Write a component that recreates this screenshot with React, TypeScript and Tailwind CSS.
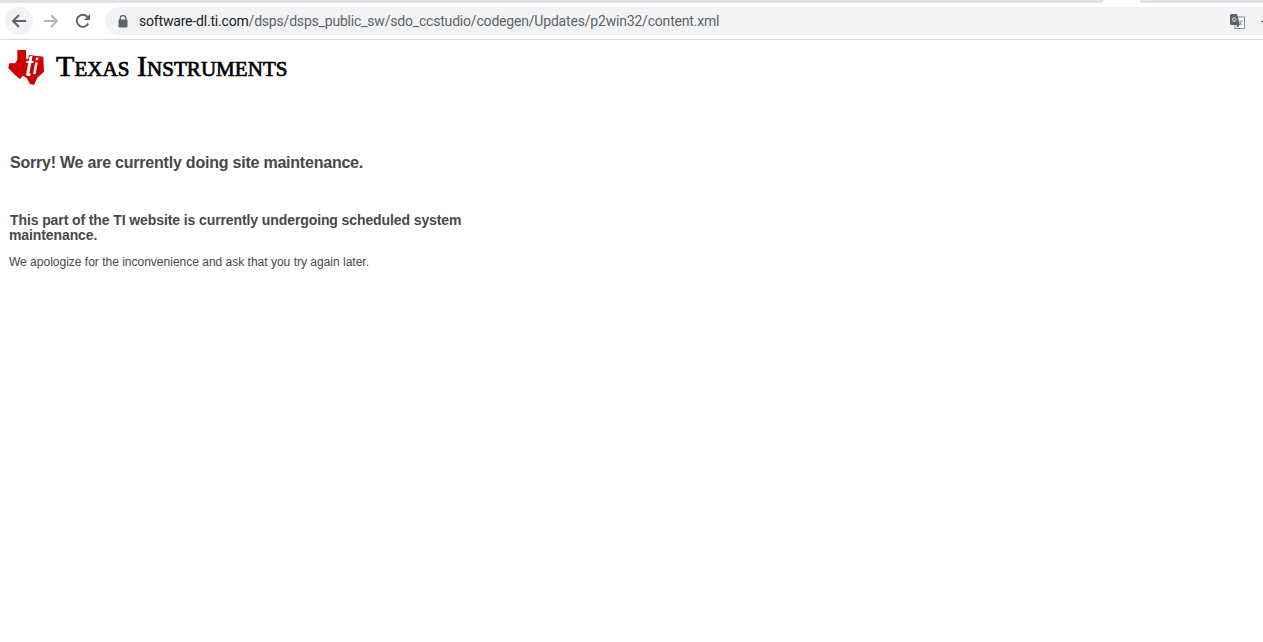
const BackIcon = () => (
  <svg width="16" height="16" viewBox="0 0 16 16" fill="none" stroke="#5f6368" strokeWidth="2">
    <path d="M15 8H2M8 2 2 8l6 6" />
  </svg>
);

const ForwardIcon = () => (
  <svg width="16" height="16" viewBox="0 0 16 16" fill="none" stroke="#b4b6b9" strokeWidth="2">
    <path d="M1 8h13M8 2l6 6-6 6" />
  </svg>
);

const ReloadIcon = () => (
  <svg width="16" height="16" viewBox="0 0 16 16" fill="none">
    <path d="M13.2 10.5A6 6 0 1 1 12.2 3.7L14 5.5" stroke="#5f6368" strokeWidth="1.9" />
    <path d="M15 1v6H9z" fill="#5f6368" />
  </svg>
);

const LockIcon = () => (
  <svg width="10" height="13" viewBox="0 0 10 13">
    <path d="M2.2 5V3.4a2.8 2.8 0 0 1 5.6 0V5" fill="none" stroke="#5f6368" strokeWidth="1.3" />
    <rect x="0.5" y="4.6" width="9" height="8" rx="1" fill="#5f6368" />
  </svg>
);

const TranslateIcon = () => (
  <svg width="15" height="15" viewBox="0 0 15 15">
    <rect x="5" y="3" width="9.5" height="11.5" fill="#fff" stroke="#8a8d91" />
    <path d="M0 1.5A1.5 1.5 0 0 1 1.5 0H7l3 11H1.5A1.5 1.5 0 0 1 0 9.5z" fill="#5f6368" />
    <path d="M6.5 11h3l-2 3z" fill="#5f6368" />
    <circle cx="4.2" cy="5.5" r="1.8" fill="none" stroke="#e8e8e8" strokeWidth="1" />
    <path d="M9.5 7h3.5M11 7.5l-1 4M10 8.500l3 3" stroke="#8a8d91" strokeWidth="0.9" fill="none" />
  </svg>
);

const TiLogo = () => (
  <svg width="37" height="36" viewBox="0 0 37 36" className="shrink-0">
    <path
      fill="#cc0000"
      d="M9.300 0H18v8.300L20 9.500 21 5l14.300 1.700.7 15-6.700 6L26 35l-4-1-3.300-6-4-2.300-2.700 3.600-5-4.300-6.700-6.700 1-5H7L9.300 10z"
    />
    <path fill="#fff" d="M21.800 6h2.600l-.7 5h2l-.4 2h-2l-1.800 9.500c-.2 1 .4 1.300 1.200 1.100l-.4 2.400h-2.600c-1.200 0-1.700-.8-1.500-2l2-11h-2l.4-2h2z" />
    <path fill="#fff" d="M28 7.500h2.500l-.5 2.700h-2.500zM27.200 12.500h2.500L27.600 24h-2.500z" />
  </svg>
);

const App = () => (
  <div className="h-[642px] w-full overflow-hidden bg-white font-['Liberation_Sans',Arial,sans-serif]">
    <div className="flex h-[3px] bg-white">
      <div className="h-full w-[1103px] rounded-br-lg bg-[#dee1e6]" />
      <div className="ml-[37px] h-full grow rounded-bl-lg bg-[#dee1e6]" />
    </div>

    <div className="flex h-[37px] items-center border-b border-[#d9dadc] pb-[2px] pt-[2px]">
      <div className="ml-[5px] flex h-7 w-7 items-center justify-center rounded-full bg-[#f1f3f4]">
        <BackIcon />
      </div>
      <div className="ml-[4px] flex h-7 w-7 items-center justify-center">
        <ForwardIcon />
      </div>
      <div className="ml-[4px] flex h-7 w-7 items-center justify-center">
        <ReloadIcon />
      </div>
      <div className="ml-[8px] flex h-7 grow items-center rounded-l-full bg-[#f1f3f4] pl-[13px]">
        <LockIcon />
        <span className="ml-[11px] whitespace-nowrap font-['Roboto','Noto_Sans',sans-serif] text-[14px] tracking-[-0.19px] text-[#5f6368]">
          <span className="text-[#202124]">software-dl.ti.com</span>
          /dsps/dsps_public_sw/sdo_ccstudio/codegen/Updates/p2win32/content.xml
        </span>
        <div className="ml-auto flex items-center">
          <TranslateIcon />
          <div className="ml-[16px] h-px w-[2px] bg-[#5f6368]" />
        </div>
      </div>
    </div>

    <div className="flex items-start pl-2 pt-[10px]">
      <TiLogo />
      <span className="ml-[11px] whitespace-nowrap font-['Liberation_Serif',serif] text-[30px] leading-[32px] tracking-[0.05px] text-black [-webkit-text-stroke:0.7px_black] [font-variant:small-caps]">
        Texas Instruments
      </span>
    </div>

    <div className="w-[470px] pl-[9px] text-[#484848]">
      <h1 className="ml-[1px] mt-[67px] text-[16px] font-bold leading-[20px] tracking-[-0.22px]">
        Sorry! We are currently doing site maintenance.
      </h1>
      <h2 className="mt-[40px] text-[14px] font-bold leading-[15px] tracking-[-0.1px]">
        <span className="ml-[1px]">This part of the TI website is currently undergoing scheduled system</span>{' '}
        maintenance.
      </h2>
      <p className="mt-[12px] text-[12px] leading-[14px]">
        We apologize for the inconvenience and ask that you try again later.
      </p>
    </div>
  </div>
);

export default App;
